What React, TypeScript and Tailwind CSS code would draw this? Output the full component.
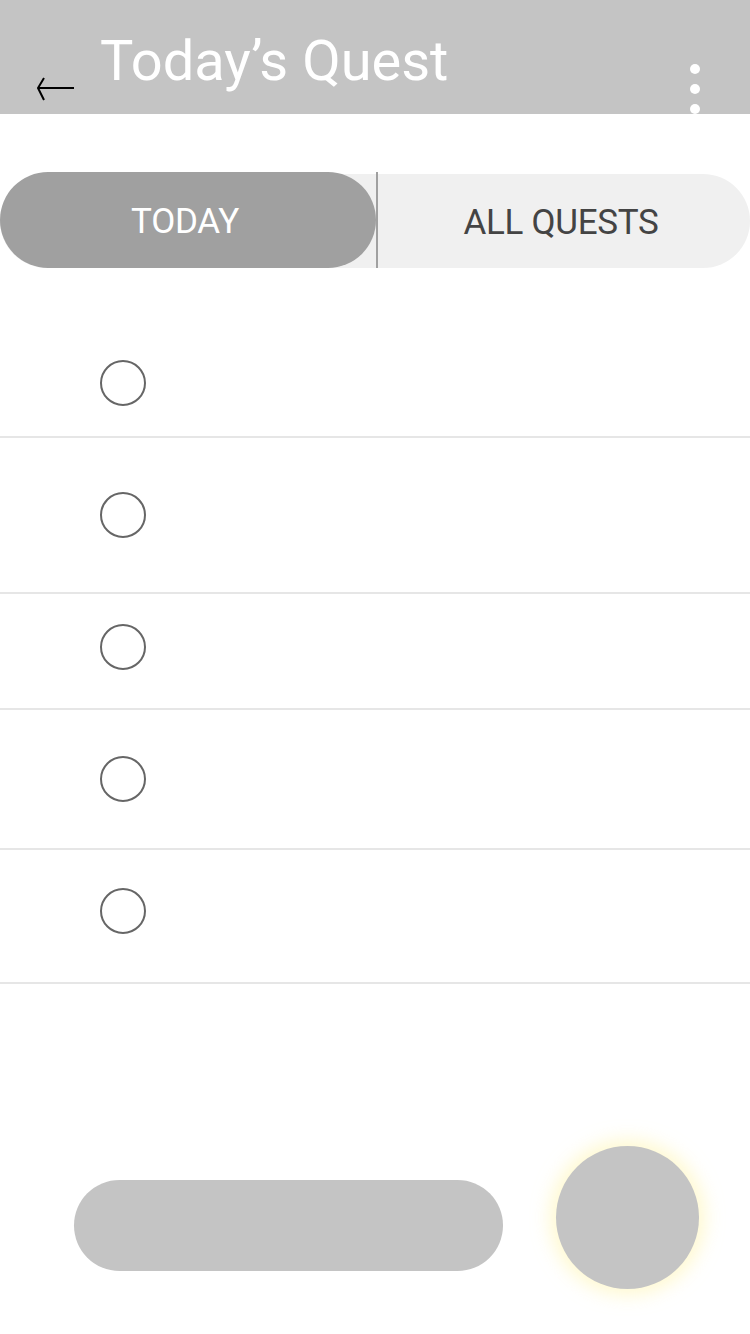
const rows = [
  { h: 108, pb: 0 },
  { h: 156, pb: 0 },
  { h: 116, pb: 8 },
  { h: 140, pb: 0 },
  { h: 134, pb: 10 },
];

function Circle() {
  return <div className="h-[46px] w-[46px] rounded-full border-2 border-[#666666]" />;
}

export default function App() {
  return (
    <div className="flex min-h-[1334px] w-[750px] flex-col bg-white font-['Roboto',sans-serif]">
      <header className="relative flex h-[114px] items-start overflow-hidden bg-[#c4c4c4]">
        <svg className="absolute left-[36px] top-[76px]" width="40" height="26" viewBox="0 0 40 26">
          <path d="M8 2 L2 12 L8 24 M2 12 H38" fill="none" stroke="#000" strokeWidth="2" />
        </svg>
        <h1 className="ml-[100px] mt-[25px] text-[56px] leading-[72px] font-normal text-white">Today’s Quest</h1>
        <div className="absolute left-[690px] top-[64px] flex flex-col gap-[10px]">
          <span className="h-[10px] w-[10px] rounded-full bg-white" />
          <span className="h-[10px] w-[10px] rounded-full bg-white" />
          <span className="h-[10px] w-[10px] rounded-full bg-white" />
        </div>
      </header>

      <div className="mt-[58px] flex h-[96px] items-stretch">
        <div className="relative flex w-full items-stretch">
          <div className="absolute inset-x-0 bottom-0 top-[2px] rounded-full bg-[#f0f0f0]" />
          <div className="relative z-10 flex w-[376px] items-center justify-center rounded-full bg-[#a0a0a0] pt-[5px] pr-[6px] text-[35px] tracking-[-0.3px] text-white">
            TODAY
          </div>
          <div className="relative z-10 w-[2px] bg-[#a0a0a0]" />
          <div className="relative z-10 flex flex-1 items-center justify-center pt-[7px] pr-[6px] text-[35px] tracking-[-0.3px] text-[#444444]">
            ALL QUESTS
          </div>
        </div>
      </div>

      <ul className="mt-[62px]">
        {rows.map((r, i) => (
          <li
            key={i}
            className="flex items-center border-b-2 border-[#e6e6e6] pl-[100px]"
            style={{ height: r.h, paddingBottom: r.pb }}
          >
            <Circle />
          </li>
        ))}
      </ul>

      <div className="mt-[162px] flex items-start">
        <div className="ml-[74px] mt-[34px] h-[91px] w-[429px] rounded-full bg-[#c4c4c4]" />
        <div className="ml-[53px] h-[143px] w-[143px] rounded-full bg-[#c4c4c4] shadow-[0_0_18px_6px_rgba(255,244,170,0.55)]" />
      </div>
    </div>
  );
}
